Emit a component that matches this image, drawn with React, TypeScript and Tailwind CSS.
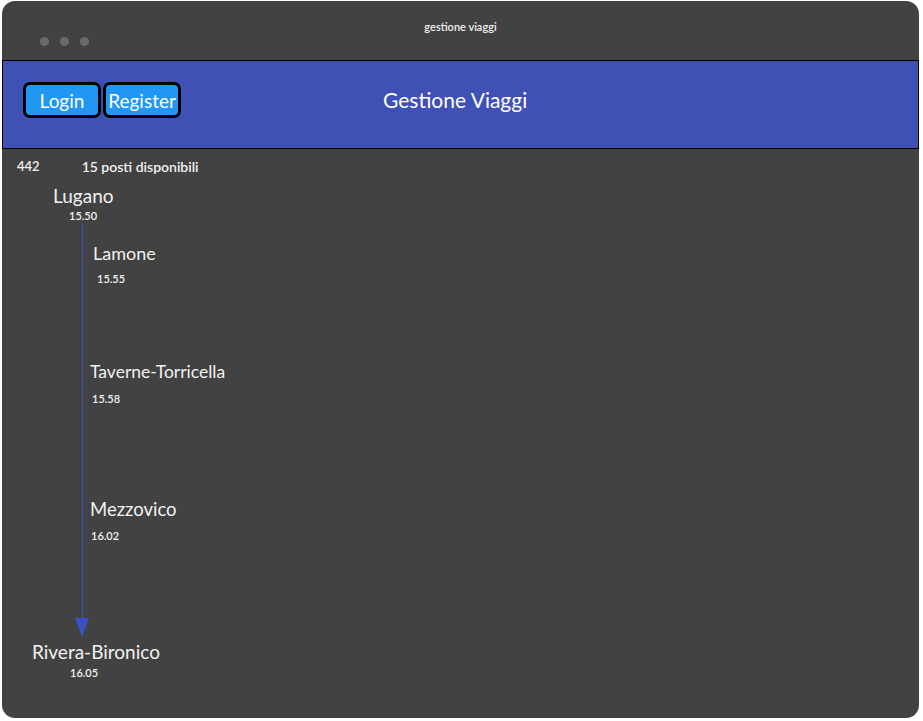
import React from "react";

const stations = [
  { name: "Lamone", time: "15.55", nameCls: "ml-[11px] mt-[23px] text-[18px]", timeCls: "ml-[15px] mt-[11px]" },
  { name: "Taverne-Torricella", time: "15.58", nameCls: "ml-[8px] mt-[79px] text-[17.5px]", timeCls: "ml-[10px] mt-[12px]" },
  { name: "Mezzovico", time: "16.02", nameCls: "ml-[8px] mt-[96px] text-[18.5px]", timeCls: "ml-[9px] mt-[12px]" },
];

export default function App() {
  return (
    <div className="w-[923px] h-[721px] bg-white p-[1px_4px_3px_2px]" style={{ fontFamily: "Lato, 'Open Sans', sans-serif" }}>
      <div className="w-[917px] h-[717px] bg-[#424242] rounded-[13px] overflow-hidden flex flex-col text-[#f1f1f1]">
        <div className="h-[59px] relative flex justify-center">
          <div className="pt-[18px] text-[11px] font-semibold text-[#eeeeee]">gestione viaggi</div>
          <div className="absolute left-[38px] top-[36px] flex gap-[11px]">
            <span className="w-[9px] h-[9px] rounded-full bg-[#6a6a6a]" />
            <span className="w-[9px] h-[9px] rounded-full bg-[#6a6a6a]" />
            <span className="w-[9px] h-[9px] rounded-full bg-[#6a6a6a]" />
          </div>
        </div>
        <div className="h-[89px] bg-[#3f51b5] border border-black flex items-start pt-[21px] relative">
          <div className="flex gap-[2px] ml-[20px]">
            <button className="w-[78px] h-[36px] bg-[#2196f3] border-[3px] border-black rounded-[7px] text-white text-[19px] leading-none">Login</button>
            <button className="w-[78px] h-[36px] bg-[#2196f3] border-[3px] border-black rounded-[7px] text-white text-[19px] leading-none">Register</button>
          </div>
          <div className="absolute left-[380px] top-[23px] text-[21px] text-white">Gestione Viaggi</div>
        </div>
        <div className="relative flex-1">
          <div className="flex items-center text-[13px] font-semibold leading-none mt-[11px] h-[13px]">
            <span className="ml-[15px]">442</span>
            <span className="ml-[42px] text-[14px]">15 posti disponibili</span>
          </div>
          <div className="relative mt-[2px]">
            <div className="absolute left-[80px] top-[37px] w-[1px] h-[398px] bg-[#3b50c4]" />
            <div className="absolute left-[73px] top-[432px] w-0 h-0 border-l-[7px] border-r-[7px] border-t-[19px] border-l-transparent border-r-transparent border-t-[#3b50c4]" />
            <div className="ml-[51px] mt-[13px] text-[19px] leading-none">Lugano</div>
            <div className="ml-[67px] mt-[5px] text-[11px] font-semibold leading-none">15.50</div>
            <div className="ml-[80px] flex flex-col">
              {stations.map((s) => (
                <React.Fragment key={s.name}>
                  <div className={`${s.nameCls} leading-none`}>{s.name}</div>
                  <div className={`${s.timeCls} text-[11px] font-semibold leading-none`}>{s.time}</div>
                </React.Fragment>
              ))}
            </div>
            <div className="ml-[30px] mt-[101px] text-[19px] leading-none">Rivera-Bironico</div>
            <div className="ml-[68px] mt-[6px] text-[11px] font-semibold leading-none">16.05</div>
          </div>
        </div>
      </div>
    </div>
  );
}
